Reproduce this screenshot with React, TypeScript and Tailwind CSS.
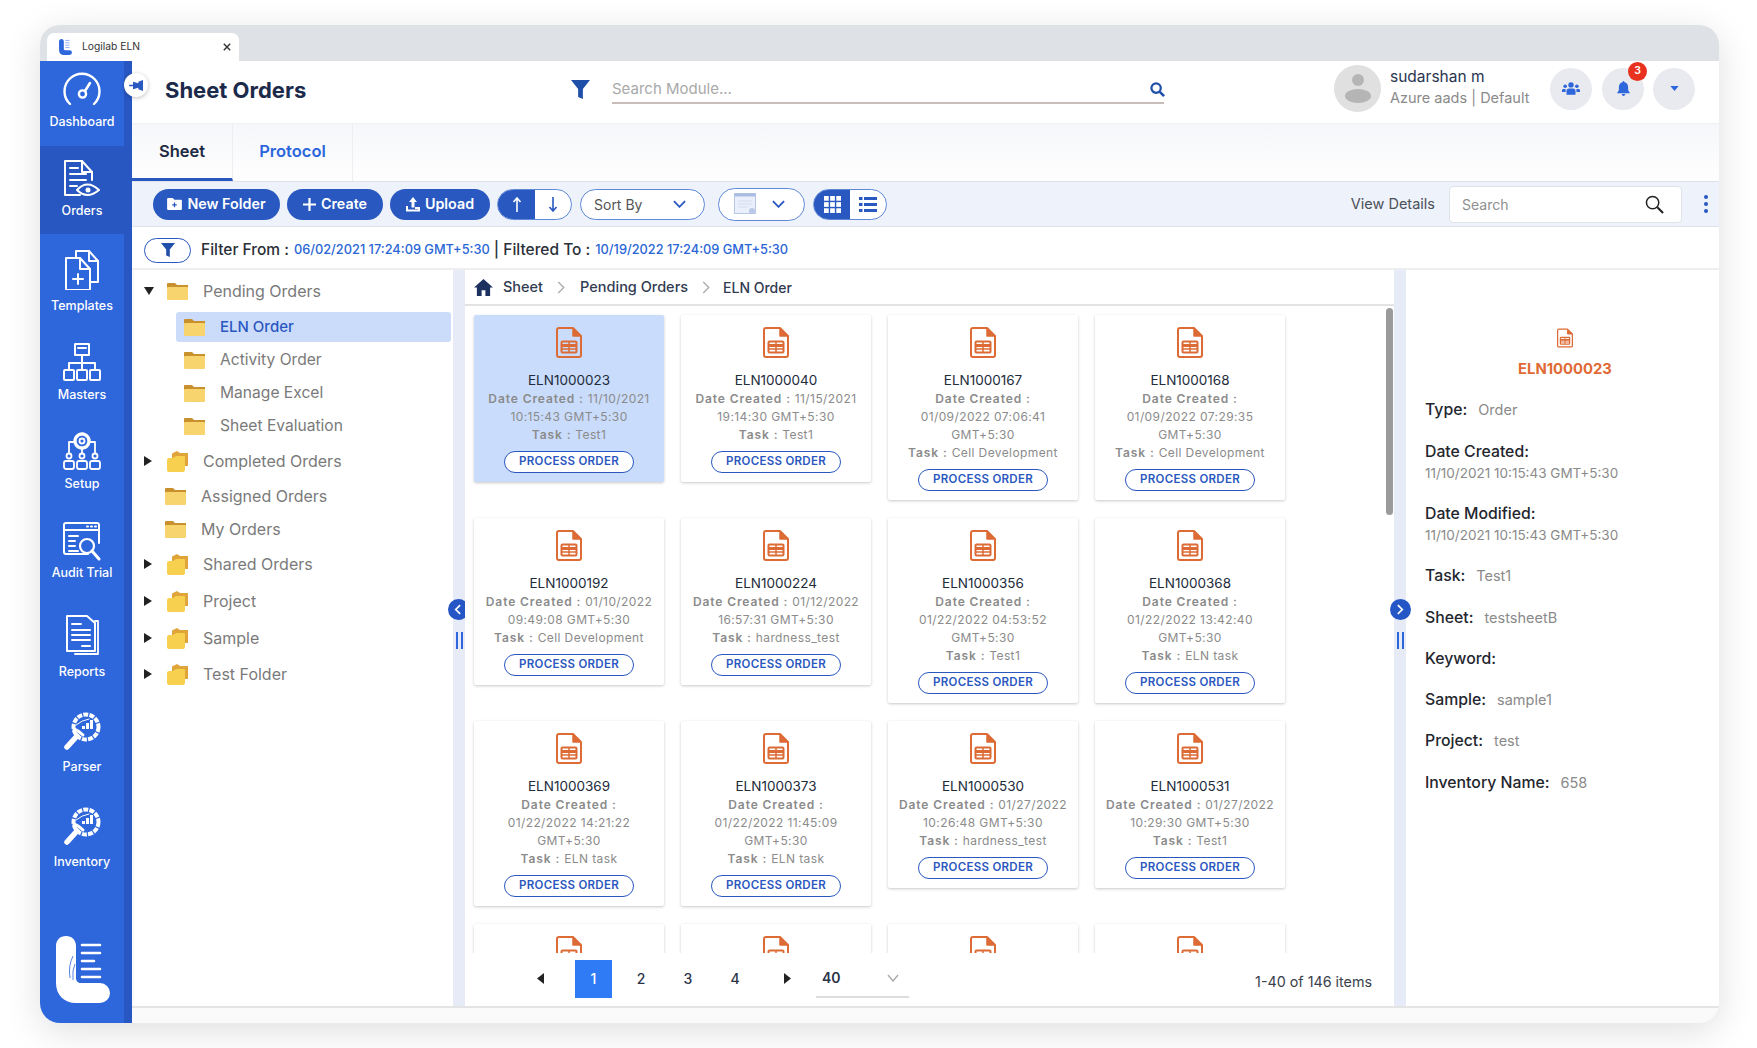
import React from "react";

const W = { fill: "none", stroke: "white", strokeWidth: 2, strokeLinecap: "round" as const, strokeLinejoin: "round" as const };

const LogoPath = "M10 0C16 0 20 4 20 10V42C20 45 22 47 25 47H44A10 10 0 0 1 44 67H20C8 67 0 59 0 47V10C0 4 4 0 10 0Z";

function NavIcon({ name }: { name: string }) {
  const c = "w-[40px] h-[40px]";
  switch (name) {
    case "Dashboard":
      return (
        <svg viewBox="0 0 40 40" className={c} {...W} strokeWidth={2.4}>
          <path d="M8 34A17.5 17.5 0 1 1 32 34" />
          <path d="M23 21L28 13" strokeWidth={2.6} />
          <circle cx="20.5" cy="24" r="3.6" />
        </svg>
      );
    case "Orders":
      return (
        <svg viewBox="0 0 40 40" className={c} {...W}>
          <path d="M18 36H3V2H20L30 13V21" />
          <path d="M20 2V13H30" />
          <path d="M8 9H16M8 15H24M8 21H24M8 27H15" />
          <path d="M15 31Q25 20 37 31Q25 41 15 31Z" />
          <circle cx="26" cy="31" r="1.5" fill="white" />
        </svg>
      );
    case "Templates":
      return (
        <svg viewBox="0 0 40 40" className={c} {...W}>
          <path d="M14 8V1H27L36 11V32H28" />
          <path d="M27 1V11H36" />
          <path d="M4 8H18L28 19V40H4Z" />
          <path d="M18 8V19H28" />
          <path d="M16 24V34M11 29H21" />
        </svg>
      );
    case "Masters":
      return (
        <svg viewBox="0 0 40 40" className={c} {...W}>
          <rect x="13" y="2" width="14" height="11" />
          <path d="M16 6H24M20 13V21M7 28V21H33V28M20 21V28" />
          <rect x="2" y="28" width="10" height="10" rx="1" />
          <rect x="15" y="28" width="10" height="10" rx="1" />
          <rect x="28" y="28" width="10" height="10" rx="1" />
        </svg>
      );
    case "Setup":
      return (
        <svg viewBox="0 0 40 40" className={c} {...W} strokeWidth={1.8}>
          <circle cx="20" cy="10" r="7" strokeDasharray="3.500 1.500" strokeWidth={3.4} />
          <circle cx="20" cy="10" r="2.500" />
          <path d="M12 11H7V22M28 11H33V22M20 18V22" />
          <circle cx="7" cy="25" r="2.500" />
          <circle cx="20" cy="25" r="2.500" />
          <circle cx="33" cy="25" r="2.500" />
          <rect x="2" y="30" width="10" height="8" rx="2" />
          <rect x="15" y="30" width="10" height="8" rx="2" />
          <rect x="28" y="30" width="10" height="8" rx="2" />
        </svg>
      );
    case "Audit Trial":
      return (
        <svg viewBox="0 0 40 40" className={c} {...W}>
          <path d="M26 33H4Q2 33 2 31V4Q2 2 4 2H35Q37 2 37 4V22" />
          <path d="M2 9H37M25 5.500H26M29 5.500H30M33 5.500H34" />
          <path d="M7 15H16M7 20H13M7 25H13M7 30H16" />
          <circle cx="25" cy="25" r="7" strokeWidth={2.2} />
          <path d="M30 30L37 38" strokeWidth={3} />
        </svg>
      );
    case "Reports":
      return (
        <svg viewBox="0 0 40 40" className={c} {...W}>
          <path d="M33 6H36V39H13" strokeWidth={1.8} />
          <path d="M5 1H25L33 8V36H5Z" />
          <path d="M10 9H19M10 15H28M10 20H28M10 25H28M20 31H28" />
        </svg>
      );
    default:
      return (
        <svg viewBox="0 0 40 40" className={c} {...W}>
          <circle cx="24" cy="15" r="12.500" strokeWidth={4} strokeDasharray="5 1.200" strokeLinecap="butt" />
          <path d="M5 35L15 24" strokeWidth={5.500} />
          <path d="M12 17Q17 19 21 23" strokeWidth={3} />
          <path d="M14 13Q20 8 27 7" strokeWidth={1} />
          <rect x="24" y="11" width="3" height="6" fill="white" stroke="none" />
          <rect x="28" y="8" width="3" height="9" fill="white" stroke="none" />
          <rect x="20" y="14" width="3" height="3" fill="white" stroke="none" />
        </svg>
      );
  }
}

const navItems = [
  { name: "Dashboard", cls: "h-[85px] pt-[9px]", gap: "mt-[4px]" },
  { name: "Orders", cls: "h-[88px] pt-[13px] bg-[#2857c2]", gap: "mt-[4px]" },
  { name: "Templates", cls: "h-[90px] pt-[16px]", gap: "mt-[8px]" },
  { name: "Masters", cls: "h-[89px] pt-[18px]", gap: "mt-[5px]" },
  { name: "Setup", cls: "h-[90px] pt-[18px]", gap: "mt-[5px]" },
  { name: "Audit Trial", cls: "h-[90px] pt-[18px]", gap: "mt-[4px]" },
  { name: "Reports", cls: "h-[97px] pt-[22px]", gap: "mt-[9px]" },
  { name: "Parser", cls: "h-[97px] pt-[22px]", gap: "mt-[7px]" },
  { name: "Inventory", cls: "h-[96px] pt-[20px]", gap: "mt-[7px]" },
];

function Sidebar() {
  return (
    <div className="w-[92px] shrink-0 flex bg-[#2e66dc]">
      <div className="w-[84px] flex flex-col">
        {navItems.map((n) => (
          <div key={n.name} className={`flex flex-col items-center text-white ${n.cls}`}>
            <NavIcon name={n.name} />
            <div className={`${n.gap} h-[16px] leading-[16px] font-medium whitespace-nowrap text-[12.500px]`}>{n.name}</div>
          </div>
        ))}
        <div className="mt-auto mb-[20px] ml-[16px]">
          <svg viewBox="0 0 54 67" className="w-[54px] h-[67px]">
            <path d={LogoPath} fill="white" />
            <path d="M26 9H44M26 17H44M26 25H38M26 33H44M26 41H44" stroke="white" strokeWidth="2.600" strokeLinecap="round" />
            <path d="M17 20Q12 30 14 42M19 28Q16 34 17 44" stroke="#2e66dc" strokeWidth="0.800" fill="none" />
          </svg>
        </div>
      </div>
      <div className="w-[8px] bg-[#2857c2]" />
    </div>
  );
}

function FileIcon({ className }: { className: string }) {
  return (
    <svg viewBox="0 0 26 31" className={className} fill="none" stroke="#dd6b35" strokeLinejoin="round">
      <path d="M3 1H17L25 9V28Q25 30 23 30H3Q1 30 1 28V3Q1 1 3 1Z" strokeWidth="2" />
      <path d="M17 1V9H25" fill="#dd6b35" strokeWidth="1.500" />
      <rect x="5.500" y="14.500" width="15" height="11" rx="1" strokeWidth="2" />
      <path d="M5.500 18.500H20.500" strokeWidth="3" />
      <path d="M13 15V25M6 22H20" strokeWidth="1.500" />
    </svg>
  );
}

function Folder({ kind }: { kind: "flat" | "stack" }) {
  if (kind === "flat") {
    return (
      <svg viewBox="0 0 21 17" className="w-[21px] h-[17px] shrink-0">
        <path d="M0 1Q0 0 1 0H8L10 2H21V5H0Z" fill="#c9902e" />
        <rect x="0" y="4" width="21" height="13" rx="1" fill="#f8d46e" />
      </svg>
    );
  }
  return (
    <svg viewBox="0 0 21 21" className="w-[21px] h-[21px] shrink-0">
      <path d="M5 3Q5 2 6 2L10 0L13 2H21V15H5Z" fill="#e0a53a" />
      <path d="M0 9Q0 7 2 7H6L9 5H17Q18 5 18 6V19Q18 21 16 21H2Q0 21 0 19Z" fill="#f8d04f" />
    </svg>
  );
}

const tree = [
  { t: "Pending Orders", arrow: "down", kind: "flat", mt: "mt-[5px]" },
  { t: "ELN Order", sel: true, kind: "flat", mt: "mt-[6px]" },
  { t: "Activity Order", child: true, kind: "flat", mt: "mt-[3px]" },
  { t: "Manage Excel", child: true, kind: "flat", mt: "mt-[3px]" },
  { t: "Sheet Evaluation", child: true, kind: "flat", mt: "mt-[3px]" },
  { t: "Completed Orders", arrow: "right", kind: "stack", mt: "mt-[5px]" },
  { t: "Assigned Orders", plain: true, kind: "flat", mt: "mt-[5px]" },
  { t: "My Orders", plain: true, kind: "flat", mt: "mt-[3px]" },
  { t: "Shared Orders", arrow: "right", kind: "stack", mt: "mt-[5px]" },
  { t: "Project", arrow: "right", kind: "stack", mt: "mt-[7px]" },
  { t: "Sample", arrow: "right", kind: "stack", mt: "mt-[7px]" },
  { t: "Test Folder", arrow: "right", kind: "stack", mt: "mt-[6px]" },
];

function Tree() {
  return (
    <div className="w-[318px] shrink-0 bg-white pt-[1px] overflow-hidden ml-[3px]">
      {tree.map((r) => {
        if (r.sel || r.child) {
          return (
            <div key={r.t} className={`${r.mt} h-[30px] ml-[41px] mr-[2px] flex items-center pl-[8px] rounded-[3px] ${r.sel ? "bg-[#cbdcfb]" : ""}`}>
              <Folder kind="flat" />
              <span className={`ml-[15px] ${r.sel ? "text-[15px] text-[#2a57c0] font-medium" : "text-[15.600px] text-[#7a7a7a]"}`}>{r.t}</span>
            </div>
          );
        }
        if (r.plain) {
          return (
            <div key={r.t} className={`${r.mt} h-[30px] flex items-center pl-[30px]`}>
              <Folder kind="flat" />
              <span className="ml-[15px] text-[16px] text-[#7a7a7a]">{r.t}</span>
            </div>
          );
        }
        return (
          <div key={r.t} className={`${r.mt} h-[30px] flex items-center pl-[9px]`}>
            <span className="w-[23px] shrink-0">
              {r.arrow === "down" ? (
                <svg viewBox="0 0 10 8" className="w-[10px] h-[8px]"><path d="M0 0H10L5 8Z" fill="#222" /></svg>
              ) : (
                <svg viewBox="0 0 8 10" className="w-[8px] h-[10px]"><path d="M0 0V10L8 5Z" fill="#222" /></svg>
              )}
            </span>
            <Folder kind={r.kind as "flat" | "stack"} />
            <span className="ml-[15px] text-[16px] text-[#7a7a7a]">{r.t}</span>
          </div>
        );
      })}
    </div>
  );
}

type Card = { id: string; lines: string[]; task: string; sel?: boolean };
const cards: Card[] = [
  { id: "ELN1000023", lines: ["11/10/2021", "10:15:43 GMT+5:30"], task: "Test1", sel: true },
  { id: "ELN1000040", lines: ["11/15/2021", "19:14:30 GMT+5:30"], task: "Test1" },
  { id: "ELN1000167", lines: ["", "01/09/2022 07:06:41", "GMT+5:30"], task: "Cell Development" },
  { id: "ELN1000168", lines: ["", "01/09/2022 07:29:35", "GMT+5:30"], task: "Cell Development" },
  { id: "ELN1000192", lines: ["01/10/2022", "09:49:08 GMT+5:30"], task: "Cell Development" },
  { id: "ELN1000224", lines: ["01/12/2022", "16:57:31 GMT+5:30"], task: "hardness_test" },
  { id: "ELN1000356", lines: ["", "01/22/2022 04:53:52", "GMT+5:30"], task: "Test1" },
  { id: "ELN1000368", lines: ["", "01/22/2022 13:42:40", "GMT+5:30"], task: "ELN task" },
  { id: "ELN1000369", lines: ["", "01/22/2022 14:21:22", "GMT+5:30"], task: "ELN task" },
  { id: "ELN1000373", lines: ["", "01/22/2022 11:45:09", "GMT+5:30"], task: "ELN task" },
  { id: "ELN1000530", lines: ["01/27/2022", "10:26:48 GMT+5:30"], task: "hardness_test" },
  { id: "ELN1000531", lines: ["01/27/2022", "10:29:30 GMT+5:30"], task: "Test1" },
];

function OrderCard({ c }: { c: Card }) {
  return (
    <div className={`flex flex-col items-center pt-[12px] pb-[9px] rounded-[2px] shadow-[0_1px_3px_rgba(0,0,0,0.22)] ${c.sel ? "bg-[#c9dcfb]" : "bg-white"}`}>
      <FileIcon className="w-[26px] h-[31px]" />
      <div className="mt-[12px] h-[20px] leading-[20px] text-[13.500px] text-[#222b3a]">{c.id}</div>
      <div className="text-[12px] leading-[18px] text-[#8b8b8b] text-center tracking-[0.4px] whitespace-nowrap">
        <div>
          <span className="font-semibold tracking-[0.9px]">Date Created : </span>
          {c.lines[0]}
        </div>
        {c.lines.slice(1).map((l) => (
          <div key={l}>{l}</div>
        ))}
        <div>
          <span className="font-semibold tracking-[0.9px]">Task : </span>
          {c.task}
        </div>
      </div>
      <div className="mt-[7px] w-[130px] h-[22px] rounded-full border-[1.500px] border-[#2a57c0] bg-white flex items-center justify-center text-[11.500px] font-semibold tracking-[0.3px] text-[#2a57c0]">
        PROCESS ORDER
      </div>
    </div>
  );
}

function Pager() {
  return (
    <div className="h-[53px] shrink-0 bg-white flex items-center pb-[2px] text-[#2a3348] text-[14px] font-medium">
      <svg viewBox="0 0 7 11" className="w-[7px] h-[11px] ml-[72px]"><path d="M7 0V11L0 5.500Z" fill="#222" /></svg>
      <div className="ml-[31px] w-[37px] h-[38px] bg-[#2f7bf5] text-white flex items-center justify-center">1</div>
      <div className="ml-[9px] w-[40px] text-center">2</div>
      <div className="ml-[7px] w-[40px] text-center">3</div>
      <div className="ml-[7px] w-[40px] text-center">4</div>
      <svg viewBox="0 0 7 11" className="w-[7px] h-[11px] ml-[29px]"><path d="M0 0V11L7 5.500Z" fill="#222" /></svg>
      <div className="ml-[25px] w-[93px] h-[38px] border-b-2 border-[#dddddd] flex items-center justify-between pl-[6px] pr-[10px]">
        <span className="font-semibold">40</span>
        <svg viewBox="0 0 12 8" className="w-[12px] h-[8px]" fill="none" stroke="#aaa" strokeWidth="1.400"><path d="M1 1L6 7L11 1" /></svg>
      </div>
      <div className="ml-auto mr-[22px] mt-[6px] text-[14.300px] text-[#3a3f4c] font-normal">1-40 of 146 items</div>
    </div>
  );
}

function Main() {
  return (
    <div className="flex-1 min-w-0 flex flex-col bg-white relative">
      <div className="h-[36px] shrink-0 border-b-2 border-[#e3e3e3] flex items-center text-[14.500px] font-medium text-[#323b52]">
        <svg viewBox="0 0 20 18" className="w-[19px] h-[17px] ml-[9px]"><path d="M10 0L20 9H17V18H12V12H8V18H3V9H0Z" fill="#1d3160" /></svg>
        <span className="ml-[10px]">Sheet</span>
        <svg viewBox="0 0 8 14" className="w-[8px] h-[13px] ml-[14px]" fill="none" stroke="#aaa" strokeWidth="1.400"><path d="M1 1L7 7L1 13" /></svg>
        <span className="ml-[15px]">Pending Orders</span>
        <svg viewBox="0 0 8 14" className="w-[8px] h-[13px] ml-[14px]" fill="none" stroke="#aaa" strokeWidth="1.400"><path d="M1 1L7 7L1 13" /></svg>
        <span className="ml-[13px] text-[14px]">ELN Order</span>
      </div>
      <div className="flex-1 min-h-0 overflow-hidden pt-[9px] pl-[9px] relative">
        <div className="grid grid-cols-[repeat(4,190px)] gap-x-[17px] gap-y-[18px] items-start">
          {cards.map((c) => (
            <OrderCard key={c.id} c={c} />
          ))}
          {[0, 1, 2, 3].map((i) => (
            <div key={i} className="h-[167px] bg-white rounded-[2px] shadow-[0_1px_3px_rgba(0,0,0,0.22)] flex justify-center pt-[12px]">
              <FileIcon className="w-[26px] h-[31px]" />
            </div>
          ))}
        </div>
        <div className="absolute right-[1px] top-[2px] w-[7px] h-[207px] rounded-full bg-[#9a9a9a]" />
      </div>
      <Pager />
    </div>
  );
}

function Splitter({ dir }: { dir: "l" | "r" }) {
  return (
    <div className="w-[12px] shrink-0 bg-[#e6ebf7] relative">
      {dir === "l" ? (
        <div className="absolute left-[-5px] top-[329px] w-[17px] h-[21px] overflow-hidden">
          <div className="w-[21px] h-[21px] rounded-full bg-[#2456c5] flex items-center justify-center pr-[2px]">
            <svg viewBox="0 0 8 12" className="w-[7px] h-[11px]" fill="none" stroke="white" strokeWidth="2"><path d="M7 1L2 6L7 11" /></svg>
          </div>
        </div>
      ) : (
        <div className="absolute left-[-4px] top-[329px] w-[21px] h-[21px] rounded-full bg-[#2456c5] flex items-center justify-center z-10">
          <svg viewBox="0 0 8 12" className="w-[7px] h-[11px]" fill="none" stroke="white" strokeWidth="2"><path d="M1 1L6 6L1 11" /></svg>
        </div>
      )}
      <div className="absolute left-[3px] top-[362px] w-[7px] h-[17px] border-x-2 border-[#2e66dc]" />
    </div>
  );
}

function Detail({ k, v, cls }: { k: string; v?: string; cls: string }) {
  return (
    <div className={`${cls} h-[22px] flex items-center gap-[11px] whitespace-nowrap`}>
      <span className="text-[15.800px] font-medium text-[#23262e]">{k}</span>
      {v && <span className="text-[14.500px] text-[#8a8a8a]">{v}</span>}
    </div>
  );
}

function Stacked({ k, v, cls }: { k: string; v: string; cls: string }) {
  return (
    <div className={cls}>
      <div className="h-[21px] leading-[21px] text-[15.800px] font-medium text-[#23262e]">{k}</div>
      <div className="h-[21px] leading-[22px] text-[13.500px] text-[#8a8a8a]">{v}</div>
    </div>
  );
}

function RightPanel() {
  return (
    <div className="w-[313px] shrink-0 bg-white pl-[19px] flex flex-col">
      <div className="flex flex-col items-center mr-[14px]">
        <FileIcon className="w-[16px] h-[20px] mt-[58px]" />
        <div className="mt-[11px] h-[20px] leading-[20px] text-[14.800px] font-bold text-[#df6a35]">ELN1000023</div>
      </div>
      <Detail k="Type:" v="Order" cls="mt-[20px]" />
      <Stacked k="Date Created:" v="11/10/2021 10:15:43 GMT+5:30" cls="mt-[20px]" />
      <Stacked k="Date Modified:" v="11/10/2021 10:15:43 GMT+5:30" cls="mt-[20px]" />
      <Detail k="Task:" v="Test1" cls="mt-[20px]" />
      <Detail k="Sheet:" v="testsheetB" cls="mt-[20px]" />
      <Detail k="Keyword:" cls="mt-[19px]" />
      <Detail k="Sample:" v="sample1" cls="mt-[19px]" />
      <Detail k="Project:" v="test" cls="mt-[19px]" />
      <Detail k="Inventory Name:" v="658" cls="mt-[20px]" />
    </div>
  );
}

function Btn({ w, children }: { w: string; children: React.ReactNode }) {
  return (
    <div className={`${w} h-[31px] rounded-full bg-[#2858c0] text-white text-[14.300px] font-semibold flex items-center justify-center gap-[5px] whitespace-nowrap`}>{children}</div>
  );
}

function Toolbar() {
  return (
    <div className="h-[46px] shrink-0 bg-[#eef2fa] border-y border-[#dfe2e8] flex items-center pl-[21px]">
      <Btn w="w-[127px]">
        <svg viewBox="0 0 16 13" className="w-[15px] h-[12px]"><path d="M0 1Q0 0 1 0H6L8 2H15Q16 2 16 3V12Q16 13 15 13H1Q0 13 0 12Z" fill="white" /><path d="M8 5V10M5.500 7.500H10.500" stroke="#2858c0" strokeWidth="1.400" /></svg>
        New Folder
      </Btn>
      <div className="ml-[7px]">
        <Btn w="w-[96px]">
          <svg viewBox="0 0 13 13" className="w-[13px] h-[13px]"><path d="M6.500 0V13M0 6.500H13" stroke="white" strokeWidth="2.200" /></svg>
          Create
        </Btn>
      </div>
      <div className="ml-[7px]">
        <Btn w="w-[100px]">
          <svg viewBox="0 0 14 15" className="w-[14px] h-[15px]"><path d="M7 0L11 5H8.500V10.500H5.500V5H3Z" fill="white" /><path d="M1 9V13.500H13V11H9" stroke="white" strokeWidth="2" fill="none" /></svg>
          Upload
        </Btn>
      </div>
      <div className="ml-[7px] w-[75px] h-[31px] rounded-full border-[1.500px] border-[#5f88d8] bg-white flex overflow-hidden">
        <div className="w-[37px] bg-[#2858c0] flex items-center justify-center">
          <svg viewBox="0 0 10 15" className="w-[10px] h-[15px]" fill="none" stroke="white" strokeWidth="1.600"><path d="M5 15V2M1.500 5L5 1L8.500 5" /></svg>
        </div>
        <div className="flex-1 flex items-center justify-center">
          <svg viewBox="0 0 10 15" className="w-[10px] h-[15px]" fill="none" stroke="#2858c0" strokeWidth="1.600"><path d="M5 0V13M1.500 10L5 14L8.500 10" /></svg>
        </div>
      </div>
      <div className="ml-[8px] w-[125px] h-[31px] rounded-full border-[1.500px] border-[#5f88d8] bg-white flex items-center justify-between pl-[13px] pr-[18px] text-[14px] text-[#555]">
        Sort By
        <svg viewBox="0 0 14 8" className="w-[13px] h-[8px]" fill="none" stroke="#2858c0" strokeWidth="2"><path d="M1 1L7 7L13 1" /></svg>
      </div>
      <div className="ml-[13px] w-[87px] h-[33px] rounded-full border-[1.500px] border-[#5f88d8] bg-white flex items-center justify-between pl-[15px] pr-[19px]">
        <svg viewBox="0 0 22 22" className="w-[22px] h-[22px]">
          <rect x="0.500" y="0.500" width="21" height="20" fill="#eaf0fb" stroke="#b8c8e6" />
          <rect x="0.500" y="0.500" width="21" height="3" fill="#a9bde3" />
          <path d="M4 8H18M4 11H18M4 14H14" stroke="#d3ddf0" />
          <circle cx="18" cy="18" r="3" fill="#b8c8e6" />
        </svg>
        <svg viewBox="0 0 14 8" className="w-[13px] h-[8px]" fill="none" stroke="#2858c0" strokeWidth="2"><path d="M1 1L7 7L13 1" /></svg>
      </div>
      <div className="ml-[8px] w-[74px] h-[31px] rounded-full border-[1.500px] border-[#5f88d8] bg-white flex overflow-hidden">
        <div className="w-[36px] bg-[#2858c0] flex items-center justify-center">
          <svg viewBox="0 0 18 18" className="w-[17px] h-[17px]" fill="white">
            <rect x="0" y="0" width="5" height="5" /><rect x="6.500" y="0" width="5" height="5" /><rect x="13" y="0" width="5" height="5" />
            <rect x="0" y="6.500" width="5" height="5" /><rect x="6.500" y="6.500" width="5" height="5" /><rect x="13" y="6.500" width="5" height="5" />
            <rect x="0" y="13" width="5" height="5" /><rect x="6.500" y="13" width="5" height="5" /><rect x="13" y="13" width="5" height="5" />
          </svg>
        </div>
        <div className="flex-1 flex items-center justify-center">
          <svg viewBox="0 0 18 15" className="w-[18px] h-[15px]" fill="#2858c0">
            <rect x="0" y="0" width="3.500" height="3" /><rect x="5" y="0" width="13" height="3" />
            <rect x="0" y="6" width="3.500" height="3" /><rect x="5" y="6" width="13" height="3" />
            <rect x="0" y="12" width="3.500" height="3" /><rect x="5" y="12" width="13" height="3" />
          </svg>
        </div>
      </div>
      <div className="ml-auto text-[14.500px] text-[#4b4f58]">View Details</div>
      <div className="ml-[14px] w-[233px] h-[37px] bg-white border border-[#e0e3ea] rounded-[4px] flex items-center justify-between pl-[12px] pr-[17px] text-[14px] text-[#8f8f8f]">
        Search
        <svg viewBox="0 0 20 20" className="w-[19px] h-[19px]" fill="none" stroke="#222" strokeWidth="1.600"><circle cx="8" cy="8" r="6.500" /><path d="M13 13L19 19" strokeWidth="2.200" /></svg>
      </div>
      <div className="ml-[22px] mr-[11px] w-[4px] flex flex-col gap-[3px]">
        <div className="w-[4px] h-[4px] rounded-full bg-[#2858c0]" />
        <div className="w-[4px] h-[4px] rounded-full bg-[#2858c0]" />
        <div className="w-[4px] h-[4px] rounded-full bg-[#2858c0]" />
      </div>
    </div>
  );
}

export default function App() {
  return (
    <div className="w-[1757px] h-[1048px] bg-white pt-[25px] pl-[40px] overflow-hidden [font-family:Inter,sans-serif]">
      <div className="w-[1679px] h-[998px] rounded-[20px] overflow-hidden flex flex-col bg-[#fafafa] shadow-[0_8px_36px_rgba(0,0,0,0.13)]">
        {/* browser tab strip */}
        <div className="h-[36px] shrink-0 bg-[#dee1e6] flex items-end pl-[7px]">
          <div className="w-[192px] h-[28px] bg-white rounded-t-[7px] flex items-center pl-[12px] pr-[8px]">
            <svg viewBox="0 0 54 67" className="w-[13px] h-[16px]"><path d={LogoPath} fill="#2e66dc" /><path d="M26 6H44M26 16H44M26 26H44M26 36H44" stroke="#8eaef0" strokeWidth="4" /></svg>
            <span className="ml-[10px] text-[10.300px] text-[#333]">Logilab ELN</span>
            <svg viewBox="0 0 10 10" className="ml-auto w-[8px] h-[8px]" fill="none" stroke="#333" strokeWidth="1.800"><path d="M1 1L9 9M9 1L1 9" /></svg>
          </div>
        </div>
        <div className="flex-1 min-h-0 flex relative">
          <Sidebar />
          {/* pin */}
          <div className="absolute left-[84px] top-[12px] w-[24px] h-[24px] rounded-full bg-white shadow-[0_1px_4px_rgba(0,0,0,0.25)] flex items-center justify-center z-10">
            <svg viewBox="0 0 16 14" className="w-[15px] h-[13px]" fill="#2858c0"><path d="M0 7H5M5 4L10 5.500V8.500L5 10Z" stroke="#2858c0" strokeWidth="1.500" /><path d="M10 3L15 1V13L10 11Z" /></svg>
          </div>
          <div className="flex-1 min-w-0 flex flex-col">
            {/* header */}
            <div className="h-[62px] shrink-0 bg-white flex items-center pb-[7px]">
              <div className="ml-[33px] w-[406px] mt-[3px] text-[22px] font-bold text-[#1c2a4a]">Sheet Orders</div>
              <svg viewBox="0 0 20 20" className="w-[19px] h-[19px] mt-[2px]" fill="#1f4fa8"><path d="M0 0H20L12.500 9.500V20L7.500 18V9.500Z" /></svg>
              <div className="ml-[22px] w-[552px] h-[26px] mt-[4px] border-b-2 border-[#c8bdb9] flex items-center justify-between pb-[1px] text-[15px] text-[#a9a9a9]">
                Search Module...
                <svg viewBox="0 0 16 16" className="w-[15px] h-[15px] mr-[-1px]" fill="none" stroke="#1f4fa8" strokeWidth="2.400"><circle cx="6.500" cy="6.500" r="5" /><path d="M10.500 10.500L15 15" strokeWidth="2.800" /></svg>
              </div>
              <div className="ml-[170px] w-[47px] h-[47px] rounded-full bg-[#e0e0e0] flex flex-col items-center justify-center shrink-0">
                <div className="w-[12px] h-[12px] rounded-full bg-[#b5b5b5]" />
                <div className="mt-[3px] w-[26px] h-[14px] rounded-[50%] bg-[#b5b5b5]" />
              </div>
              <div className="ml-[9px] w-[160px] shrink-0 whitespace-nowrap mt-[-4px]">
                <div className="h-[21px] leading-[21px] text-[15.500px] text-[#2a3550]">sudarshan m</div>
                <div className="h-[21px] leading-[21px] text-[14.500px] text-[#8a8a8a]">Azure aads | Default</div>
              </div>
              <div className="w-[42px] h-[42px] rounded-full bg-[#e8eaef] flex items-center justify-center shrink-0">
                <svg viewBox="0 0 20 14" className="w-[18px] h-[13px]" fill="#2e66dc"><circle cx="10" cy="3" r="3" /><circle cx="3.500" cy="4.500" r="2" /><circle cx="16.500" cy="4.500" r="2" /><path d="M5 14V10Q5 7 8 7H12Q15 7 15 10V14Z" /><path d="M0 11V9Q0 7.500 2 7.500H4V11ZM20 11V9Q20 7.500 18 7.500H16V11Z" /></svg>
              </div>
              <div className="ml-[10px] w-[42px] h-[42px] rounded-full bg-[#e8eaef] flex items-center justify-center relative shrink-0">
                <svg viewBox="0 0 14 16" className="w-[13px] h-[15px]" fill="#2e66dc"><path d="M7 0Q8 0 8 1.200Q12 2 12 7V10L14 13H0L2 10V7Q2 2 6 1.200Q6 0 7 0Z" /><path d="M5 14H9Q8.500 16 7 16T5 14Z" /></svg>
                <div className="absolute left-[26px] top-[-6px] w-[19px] h-[19px] rounded-full bg-[#e8321f] text-white text-[10.500px] font-semibold flex items-center justify-center">3</div>
              </div>
              <div className="ml-[9px] w-[42px] h-[42px] rounded-full bg-[#e8eaef] flex items-center justify-center shrink-0">
                <svg viewBox="0 0 10 6" className="w-[9px] h-[5px]"><path d="M0 0H10L5 6Z" fill="#2e66dc" /></svg>
              </div>
            </div>
            {/* tabs */}
            <div className="h-[58px] shrink-0 bg-gradient-to-b from-[#f6f7fa] to-[#fefefe] flex border-t border-[#f0f1f4]">
              <div className="w-[101px] border-b-[3px] border-[#2858c0] border-r border-r-[#eceef2] flex items-center justify-center text-[16.500px] font-semibold text-[#1d2a44]">Sheet</div>
              <div className="w-[120px] pb-[3px] border-r border-[#eceef2] flex items-center justify-center text-[16.500px] font-semibold text-[#2c66dc]">Protocol</div>
            </div>
            <Toolbar />
            {/* filter row */}
            <div className="h-[43px] shrink-0 bg-white border-b-2 border-[#eeeeee] flex items-center pl-[12px] pt-[5px] whitespace-nowrap">
              <div className="w-[47px] h-[25px] rounded-full border-[1.500px] border-[#2858c0] flex items-center justify-center">
                <svg viewBox="0 0 14 14" className="w-[14px] h-[14px]"><path d="M0 0H14L8.800 6.500V14L5.200 12.500V6.500Z" fill="#1f4fa8" /></svg>
              </div>
              <span className="ml-[10px] text-[15.500px] font-medium text-[#2b2f38]">Filter From :</span>
              <span className="ml-[5px] text-[12.800px] font-medium text-[#2b66d6]">06/02/2021 17:24:09 GMT+5:30</span>
              <span className="ml-[4px] text-[15.500px] font-medium text-[#2b2f38]">| Filtered To :</span>
              <span className="ml-[5px] text-[12.800px] font-medium text-[#2b66d6]">10/19/2022 17:24:09 GMT+5:30</span>
            </div>
            {/* body */}
            <div className="h-[738px] shrink-0 flex border-b-2 border-[#e4e4e4]">
              <Tree />
              <Splitter dir="l" />
              <Main />
              <Splitter dir="r" />
              <RightPanel />
            </div>
          </div>
        </div>
      </div>
    </div>
  );
}
